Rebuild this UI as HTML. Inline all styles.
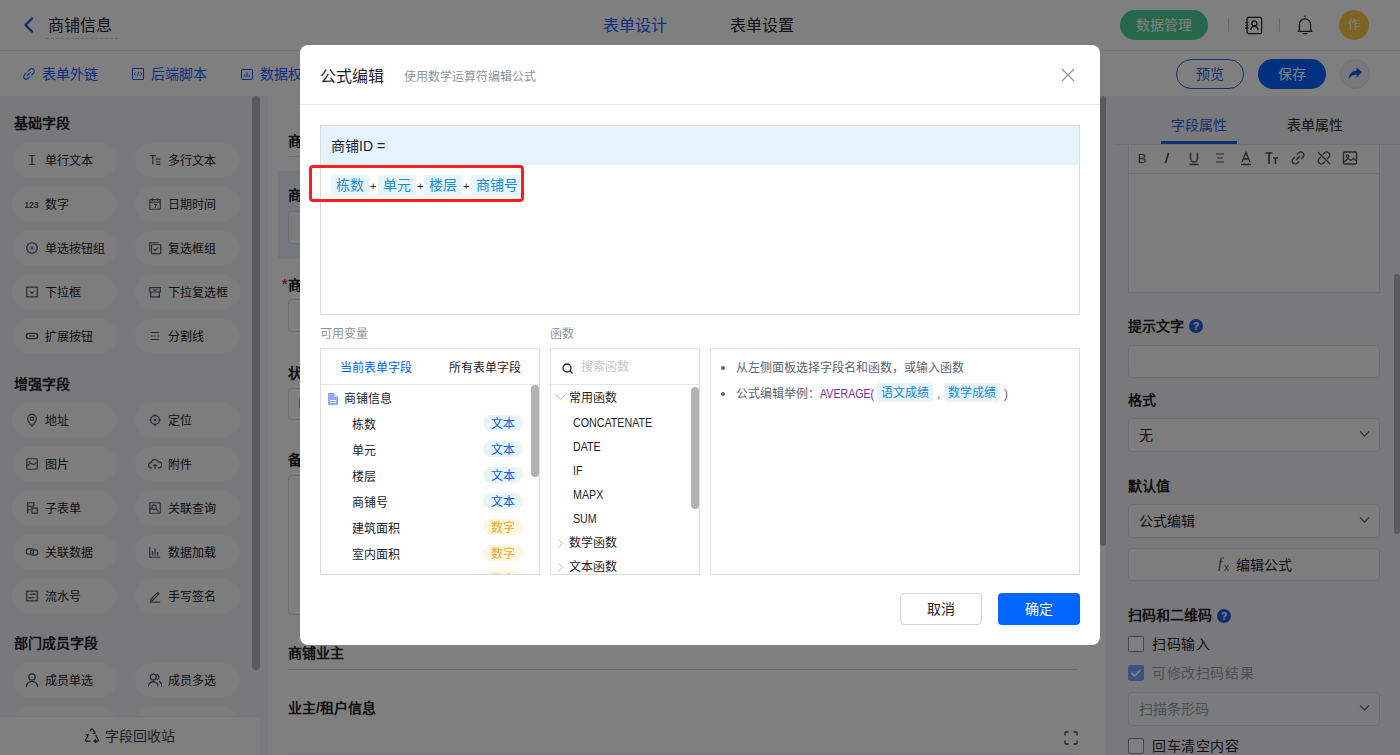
<!DOCTYPE html>
<html lang="zh-CN"><head><meta charset="utf-8">
<style>
*{box-sizing:border-box;margin:0;padding:0}
html,body{width:1400px;height:755px;overflow:hidden;background:#fff;font-family:"Liberation Sans",sans-serif;color:#1f2329}
.a{position:absolute}
.t{white-space:nowrap;line-height:1}
#page{position:absolute;left:0;top:0;width:1400px;height:755px;background:#fff}
#hdr{left:0;top:0;width:1400px;height:51px;border-bottom:1px solid #e8e9eb;background:#fff}
#tb{left:0;top:51px;width:1400px;height:45px;background:#fff}
#side{left:0;top:96px;width:268px;height:659px;background:#f2f3f6}
#center{left:268px;top:96px;width:838px;height:659px;background:#fff}
#right{left:1106px;top:96px;width:294px;height:659px;background:#f2f3f6}
.pill{position:absolute;width:105px;height:34px;border-radius:17px;background:#fafafb}
.pill .ic{position:absolute;left:13px;top:10px;width:14px;height:14px}
.pill .tx{position:absolute;left:33px;top:11px;font-size:12px;line-height:14px;color:#1f2329;white-space:nowrap}
.sh{position:absolute;left:14px;font-size:14px;font-weight:bold;line-height:16px;color:#1f2329;white-space:nowrap}
#overlay{left:0;top:0;width:1400px;height:755px;background:rgba(0,0,0,.5)}
#modal{left:300px;top:45px;width:800px;height:600px;background:#fff;border-radius:8px;overflow:hidden}
</style></head>
<body>
<div id="page">

  <div id="hdr" class="a">
    <svg class="a" style="left:22px;top:17px" width="14" height="16" viewBox="0 0 14 16"><polyline points="10,1.5 3.5,8 10,14.5" fill="none" stroke="#1f4fd6" stroke-width="2.2" stroke-linecap="round" stroke-linejoin="round"/></svg>
    <div class="a t" style="left:48px;top:18px;font-size:16px;color:#1f2329">商铺信息</div>
    <div class="a" style="left:46px;top:38px;width:72px;border-top:1px dashed #c9ccd2"></div>
    <div class="a t" style="left:603px;top:18px;font-size:16px;color:#1a5cff">表单设计</div>
    <div class="a t" style="left:730px;top:18px;font-size:16px;color:#1f2329">表单设置</div>
    <div class="a t" style="left:1120px;top:10px;width:88px;height:30px;border-radius:15px;background:#4ccf96;color:#fff;font-size:14px;line-height:30px;text-align:center">数据管理</div>
    <div class="a" style="left:1228px;top:18px;width:1px;height:14px;background:#d5d7db"></div>
    <svg class="a" style="left:1243px;top:15px" width="21" height="21" viewBox="0 0 21 21"><rect x="4" y="2.4" width="14.6" height="16.2" rx="1.5" fill="none" stroke="#262626" stroke-width="1.3"/><circle cx="11.4" cy="8.4" r="2.5" fill="none" stroke="#262626" stroke-width="1.3"/><path d="M7.8 14.9a3.6 3.6 0 0 1 7.2 0" fill="none" stroke="#262626" stroke-width="1.3"/><path d="M2 7.6h3.5M2 10.5h3.5M2 13.2h3.5" stroke="#262626" stroke-width="1.2"/></svg>
    <div class="a" style="left:1279px;top:18px;width:1px;height:14px;background:#d5d7db"></div>
    <svg class="a" style="left:1296px;top:15px" width="18" height="21" viewBox="0 0 18 21"><path d="M2.2 16.4Q3.4 15.8 3.4 14.5V9.5a5.6 5.6 0 0 1 11.2 0v5q0 1.3 1.2 1.9z" fill="none" stroke="#262626" stroke-width="1.3" stroke-linejoin="round"/><path d="M7 18.6h4M9 1.2v.6" stroke="#262626" stroke-width="1.3" stroke-linecap="round"/></svg>
    <div class="a t" style="left:1339px;top:10px;width:30px;height:30px;border-radius:15px;background:#fdc949;color:#fff;font-size:12px;line-height:31px;text-align:center">作</div>
  </div>
  <div id="tb" class="a">
    <svg class="a" style="left:22px;top:16px" width="14" height="14" viewBox="0 0 14 14"><path d="M6.2 4.2L8.3 2.1a2.6 2.6 0 0 1 3.6 3.6L9.8 7.8M7.8 9.8L5.7 11.9a2.6 2.6 0 0 1-3.6-3.6L4.2 6.2M5.3 8.7l3.4-3.4" fill="none" stroke="#1a5cff" stroke-width="1.1" stroke-linecap="round"/></svg>
    <div class="a t" style="left:42px;top:16px;font-size:14px;color:#1a5cff">表单外链</div>
    <svg class="a" style="left:131px;top:16px" width="14" height="14" viewBox="0 0 14 14"><rect x="1.5" y="1.5" width="11" height="11" rx="0.8" fill="none" stroke="#1a5cff" stroke-width="1.1"/><path d="M4.8 5.3L3.2 7l1.6 1.7M9.2 5.3L10.8 7 9.2 8.7M7.8 4.8L6.2 9.2" fill="none" stroke="#1a5cff" stroke-width="0.9"/></svg>
    <div class="a t" style="left:151px;top:16px;font-size:14px;color:#1a5cff">后端脚本</div>
    <svg class="a" style="left:240px;top:17px" width="14" height="13" viewBox="0 0 14 13"><rect x="1.5" y="1.5" width="11" height="10" rx="1.5" fill="none" stroke="#1a5cff" stroke-width="1.1"/><path d="M4.8 9V6.5M7 9V4.5M9.2 9V7" stroke="#1a5cff" stroke-width="1.1"/></svg>
    <div class="a t" style="left:260px;top:16px;font-size:14px;color:#1a5cff">数据权限</div>
    <div class="a t" style="left:1176px;top:8px;width:68px;height:30px;border-radius:15px;border:1px solid #1f5fe0;color:#1f5fe0;font-size:14px;line-height:28px;text-align:center">预览</div>
    <div class="a t" style="left:1258px;top:8px;width:68px;height:30px;border-radius:15px;background:#0062ff;color:#fff;font-size:14px;line-height:30px;text-align:center">保存</div>
    <div class="a" style="left:1340px;top:8px;width:30px;height:30px;border-radius:15px;background:#eef2fb;border:1px solid #dfe5f2"></div>
    <svg class="a" style="left:1347px;top:15px" width="16" height="16" viewBox="0 0 16 16"><path d="M15 6L9.5 1.5v3C5 5 2 8 1.5 13c1.8-3 4.5-4.2 8-4.2v3z" fill="#1f5fe0"/></svg>
  </div>

  <div id="side" class="a">
<div class="pill" style="left:12px;top:47px"><svg class="ic" viewBox="0 0 16 16"><path d="M5 3h6M5 13h6M8 3v10" stroke="#4e5870" stroke-width="1.5" fill="none"/></svg><div class="tx">单行文本</div></div>
<div class="pill" style="left:135px;top:47px"><svg class="ic" viewBox="0 0 16 16"><path d="M2 3h7M5.5 3v10M9 7h5M9 10h5M9 13h5" stroke="#4e5870" stroke-width="1.4" fill="none"/></svg><div class="tx">多行文本</div></div>
<div class="pill" style="left:12px;top:91px"><svg class="ic" viewBox="0 0 16 16"><text x="-1" y="12" font-size="10" font-weight="bold" fill="#4e5870" font-family="Liberation Sans">123</text></svg><div class="tx">数字</div></div>
<div class="pill" style="left:135px;top:91px"><svg class="ic" viewBox="0 0 16 16"><rect x="2" y="3" width="12" height="11" rx="1" fill="none" stroke="#4e5870" stroke-width="1.3"/><path d="M2 6h12M5 1.5v3M11 1.5v3M7 8.5h2.5l-1.5 4" stroke="#4e5870" stroke-width="1.2" fill="none"/></svg><div class="tx">日期时间</div></div>
<div class="pill" style="left:12px;top:135px"><svg class="ic" viewBox="0 0 16 16"><circle cx="8" cy="8" r="6" fill="none" stroke="#4e5870" stroke-width="1.4"/><circle cx="8" cy="8" r="1.6" fill="#4e5870"/></svg><div class="tx">单选按钮组</div></div>
<div class="pill" style="left:135px;top:135px"><svg class="ic" viewBox="0 0 16 16"><path d="M2 12V2h10" fill="none" stroke="#4e5870" stroke-width="1.2"/><rect x="4" y="4" width="10.5" height="10.5" rx="1" fill="none" stroke="#4e5870" stroke-width="1.4"/><path d="M6.3 9l1.8 1.8 3.5-3.5" fill="none" stroke="#4e5870" stroke-width="1.3"/></svg><div class="tx">复选框组</div></div>
<div class="pill" style="left:12px;top:179px"><svg class="ic" viewBox="0 0 16 16"><rect x="2" y="2.5" width="12" height="11" rx="1" fill="none" stroke="#4e5870" stroke-width="1.4"/><path d="M5.5 7l2.5 2.5L10.5 7" fill="none" stroke="#4e5870" stroke-width="1.3"/></svg><div class="tx">下拉框</div></div>
<div class="pill" style="left:135px;top:179px"><svg class="ic" viewBox="0 0 16 16"><path d="M2 3h12v5H2z M3 8.5v5h10v-5" fill="none" stroke="#4e5870" stroke-width="1.4"/><path d="M6 5l2 1.5L10 5" fill="none" stroke="#4e5870" stroke-width="1.2"/></svg><div class="tx">下拉复选框</div></div>
<div class="pill" style="left:12px;top:223px"><svg class="ic" viewBox="0 0 16 16"><rect x="1.5" y="5" width="13" height="6" rx="3" fill="none" stroke="#4e5870" stroke-width="1.5"/><path d="M5 8h6" stroke="#4e5870" stroke-width="1.3"/></svg><div class="tx">扩展按钮</div></div>
<div class="pill" style="left:135px;top:223px"><svg class="ic" viewBox="0 0 16 16"><path d="M3 4h10M3 8h2.5M7 8h2M10.5 8h2.5M3 12h10" stroke="#4e5870" stroke-width="1.3" fill="none"/></svg><div class="tx">分割线</div></div>
<div class="pill" style="left:12px;top:307px"><svg class="ic" viewBox="0 0 16 16"><path d="M8 15C4.5 11 3 8.8 3 6.5a5 5 0 0 1 10 0C13 8.8 11.5 11 8 15z" fill="none" stroke="#4e5870" stroke-width="1.4"/><circle cx="8" cy="6.5" r="1.8" fill="none" stroke="#4e5870" stroke-width="1.3"/></svg><div class="tx">地址</div></div>
<div class="pill" style="left:135px;top:307px"><svg class="ic" viewBox="0 0 16 16"><circle cx="8" cy="8" r="5" fill="none" stroke="#4e5870" stroke-width="1.4"/><circle cx="8" cy="8" r="1.5" fill="#4e5870"/><path d="M8 1v2.5M8 12.5V15M1 8h2.5M12.5 8H15" stroke="#4e5870" stroke-width="1.4"/></svg><div class="tx">定位</div></div>
<div class="pill" style="left:12px;top:351px"><svg class="ic" viewBox="0 0 16 16"><rect x="2" y="2" width="12" height="12" rx="1.2" fill="none" stroke="#4e5870" stroke-width="1.4"/><path d="M2.5 10.5c2-3 4-4 6-2.5s3 0 5-2" fill="none" stroke="#4e5870" stroke-width="1.3"/><circle cx="5.2" cy="5.2" r="1" fill="#4e5870"/></svg><div class="tx">图片</div></div>
<div class="pill" style="left:135px;top:351px"><svg class="ic" viewBox="0 0 16 16"><path d="M4.5 12.5H4a3 3 0 0 1-.5-6A4.5 4.5 0 0 1 12 5.5a3.2 3.2 0 0 1 .5 7H11.5" fill="none" stroke="#4e5870" stroke-width="1.4"/><path d="M8 14V8.5M6 10.5l2-2 2 2" fill="none" stroke="#4e5870" stroke-width="1.3"/></svg><div class="tx">附件</div></div>
<div class="pill" style="left:12px;top:395px"><svg class="ic" viewBox="0 0 16 16"><path d="M3 14V2h7v4M3 6h7M3 10h4" fill="none" stroke="#4e5870" stroke-width="1.4"/><rect x="8" y="8" width="6" height="6" fill="none" stroke="#4e5870" stroke-width="1.4"/></svg><div class="tx">子表单</div></div>
<div class="pill" style="left:135px;top:395px"><svg class="ic" viewBox="0 0 16 16"><rect x="2" y="2" width="12" height="12" rx="1" fill="none" stroke="#4e5870" stroke-width="1.4"/><circle cx="7" cy="7" r="2.5" fill="none" stroke="#4e5870" stroke-width="1.3"/><path d="M9 9l3 3M2 9h3" stroke="#4e5870" stroke-width="1.3"/></svg><div class="tx">关联查询</div></div>
<div class="pill" style="left:12px;top:439px"><svg class="ic" viewBox="0 0 16 16"><rect x="1.5" y="4.5" width="8" height="6" rx="2" fill="none" stroke="#4e5870" stroke-width="1.4"/><rect x="6.5" y="5.5" width="8" height="6" rx="2" fill="none" stroke="#4e5870" stroke-width="1.4"/></svg><div class="tx">关联数据</div></div>
<div class="pill" style="left:135px;top:439px"><svg class="ic" viewBox="0 0 16 16"><path d="M2 2v12h12M5 12V7M8 12V4M11 12V8" fill="none" stroke="#4e5870" stroke-width="1.4"/></svg><div class="tx">数据加载</div></div>
<div class="pill" style="left:12px;top:483px"><svg class="ic" viewBox="0 0 16 16"><rect x="2" y="2.5" width="12" height="11" rx="1" fill="none" stroke="#4e5870" stroke-width="1.4"/><path d="M5 6h6l-1.5-1.3M11 10H5l1.5 1.3" fill="none" stroke="#4e5870" stroke-width="1.2"/></svg><div class="tx">流水号</div></div>
<div class="pill" style="left:135px;top:483px"><svg class="ic" viewBox="0 0 16 16"><path d="M3 12L11 4l1.5 1.5-8 8H3z" fill="none" stroke="#4e5870" stroke-width="1.3"/><path d="M2 15h12" stroke="#4e5870" stroke-width="1.3"/></svg><div class="tx">手写签名</div></div>
<div class="pill" style="left:12px;top:567px"><svg class="ic" viewBox="0 0 16 16"><circle cx="8" cy="4.6" r="3.6" fill="none" stroke="#4e5870" stroke-width="1.5"/><path d="M1.5 16a6.5 6.5 0 0 1 13 0" fill="none" stroke="#4e5870" stroke-width="1.5"/></svg><div class="tx">成员单选</div></div>
<div class="pill" style="left:135px;top:567px"><svg class="ic" viewBox="0 0 16 16"><circle cx="6" cy="4.6" r="3.4" fill="none" stroke="#4e5870" stroke-width="1.5"/><path d="M0.5 15.5a5.5 5.5 0 0 1 11 0M9.8 1.5a3.4 3.4 0 0 1 .5 6.5M12.5 9.5a5.5 5.5 0 0 1 3 6" fill="none" stroke="#4e5870" stroke-width="1.5"/></svg><div class="tx">成员多选</div></div>
<div class="pill" style="left:12px;top:611px"><svg class="ic" viewBox="0 0 16 16"><circle cx="8" cy="4.6" r="3.6" fill="none" stroke="#4e5870" stroke-width="1.5"/><path d="M1.5 16a6.5 6.5 0 0 1 13 0" fill="none" stroke="#4e5870" stroke-width="1.5"/></svg><div class="tx">部门单选</div></div>
<div class="pill" style="left:135px;top:611px"><svg class="ic" viewBox="0 0 16 16"><circle cx="6" cy="4.6" r="3.4" fill="none" stroke="#4e5870" stroke-width="1.5"/><path d="M0.5 15.5a5.5 5.5 0 0 1 11 0M9.8 1.5a3.4 3.4 0 0 1 .5 6.5M12.5 9.5a5.5 5.5 0 0 1 3 6" fill="none" stroke="#4e5870" stroke-width="1.5"/></svg><div class="tx">部门多选</div></div>
<div class="sh" style="top:19px">基础字段</div>
<div class="sh" style="top:280px">增强字段</div>
<div class="sh" style="top:539px">部门成员字段</div>
<div class="a" style="left:252px;top:0px;width:8px;height:574px;border-radius:4px;background:#b3b5b9"></div>
<div class="a" style="left:0;top:620px;width:260px;height:39px;background:#fff;border-top:1px solid #eceef1"></div>
<svg class="a" style="left:84px;top:632px" width="16" height="16" viewBox="0 0 16 16"><path d="M6.2 2.8L7.3 1.2a.8.8 0 0 1 1.4 0l2.3 3.9M11.8 7.5l2.6 4.4a.8.8 0 0 1-.7 1.2H10M6 13.1H2.3a.8.8 0 0 1-.7-1.2L3.8 8M9.8 3.4l1.3 1.8-2.2.3M12 14.6l-2-1.5 1.7-1.5M2.6 6.4l1.3 1.7.8-2" fill="none" stroke="#2a2e36" stroke-width="1.2" stroke-linejoin="round" stroke-linecap="round"/></svg>
<div class="a t" style="left:105px;top:633px;font-size:14px;color:#3c4048">字段回收站</div>
</div>
  <div id="center" class="a">
<div class="a t" style="left:20px;top:38px;font-size:14px;font-weight:bold">商铺信息</div>
<div class="a" style="left:20px;top:60px;width:790px;height:1px;background:#e3e5e9"></div>
<div class="a" style="left:10px;top:75px;width:810px;height:88px;background:#eaf0fc"></div>
<div class="a t" style="left:20px;top:92px;font-size:14px;font-weight:bold">商铺ID</div>
<div class="a" style="left:20px;top:115px;width:790px;height:33px;border:1px solid #dcdfe5;border-radius:4px;background:#f7f8fa"></div>
<div class="a t" style="left:14px;top:181px;font-size:14px;font-weight:bold;color:#e03a3a">*</div>
<div class="a t" style="left:20px;top:182px;font-size:14px;font-weight:bold">商铺名称</div>
<div class="a" style="left:20px;top:203px;width:790px;height:33px;border:1px solid #dcdfe5;border-radius:4px;background:#fff"></div>
<div class="a t" style="left:20px;top:270px;font-size:14px;font-weight:bold">状态</div>
<div class="a" style="left:20px;top:292px;width:790px;height:32px;border:1px solid #dcdfe5;border-radius:4px;background:#fff"></div>
<div class="a" style="left:31px;top:302px;width:12px;height:11px;background:#4cc38a;border-radius:2px"></div>
<div class="a t" style="left:20px;top:357px;font-size:14px;font-weight:bold">备注</div>
<div class="a" style="left:20px;top:379px;width:790px;height:140px;border:1px solid #dcdfe5;border-radius:4px;background:#fff"></div>
<div class="a t" style="left:20px;top:550px;font-size:14px;font-weight:bold">商铺业主</div>
<div class="a" style="left:20px;top:573px;width:790px;height:1px;background:#d9dbe0"></div>
<div class="a t" style="left:20px;top:605px;font-size:14px;font-weight:bold">业主/租户信息</div>
<svg class="a" style="left:796px;top:635px" width="14" height="14" viewBox="0 0 14 14"><path d="M1 4.5V2a1 1 0 0 1 1-1h2.5M9.5 1H12a1 1 0 0 1 1 1v2.5M13 9.5V12a1 1 0 0 1-1 1H9.5M4.5 13H2a1 1 0 0 1-1-1V9.5" fill="none" stroke="#3c4048" stroke-width="1.3"/></svg>
<div class="a" style="left:20px;top:658px;width:790px;height:1px;background:#e8e9ec"></div>
<div class="a" style="left:832px;top:0;width:6px;height:450px;border-radius:3px;background:#b3b5b9"></div>
</div>
  <div id="right" class="a">
<div class="a t" style="left:65px;top:22px;font-size:14px;color:#1f5fe0">字段属性</div>
<div class="a t" style="left:181px;top:22px;font-size:14px;color:#1f2329">表单属性</div>
<div class="a" style="left:8px;top:48px;width:286px;height:1px;background:#dfe1e6"></div>
<div class="a" style="left:55px;top:45px;width:76px;height:3px;background:#1f5fe0"></div>
<div class="a" style="left:22px;top:49px;width:252px;height:148px;border:1px solid #dcdfe5;border-top:none;background:#fafafb"></div>
<div class="a" style="left:22px;top:77px;width:252px;height:1px;background:#dcdfe5"></div>
<svg class="a" style="left:28px;top:54px" width="16" height="16" viewBox="0 0 16 16"><text x="8" y="13" font-size="13" text-anchor="middle" fill="#4a4f59" font-family="Liberation Sans">B</text></svg>
<svg class="a" style="left:53px;top:54px" width="16" height="16" viewBox="0 0 16 16"><path d="M9.5 3L6.5 13" stroke="#4a4f59" stroke-width="1.6"/></svg>
<svg class="a" style="left:80px;top:54px" width="16" height="16" viewBox="0 0 16 16"><path d="M4.5 2.5v6a3.5 3.5 0 0 0 7 0v-6M3.5 14.5h9" fill="none" stroke="#4a4f59" stroke-width="1.3"/></svg>
<svg class="a" style="left:106px;top:54px" width="16" height="16" viewBox="0 0 16 16"><path d="M4 4h8M5 8h6M4 12h8" stroke="#4a4f59" stroke-width="1.2"/></svg>
<svg class="a" style="left:132px;top:54px" width="16" height="16" viewBox="0 0 16 16"><path d="M4 12L8 2.5 12 12M5.5 9h5M3 14.5h10" fill="none" stroke="#4a4f59" stroke-width="1.3"/></svg>
<svg class="a" style="left:158px;top:54px" width="16" height="16" viewBox="0 0 16 16"><path d="M1.5 3h7M5 3v11M9 8h5M11.5 8v6" fill="none" stroke="#4a4f59" stroke-width="1.6"/></svg>
<svg class="a" style="left:184px;top:54px" width="16" height="16" viewBox="0 0 16 16"><path d="M7 4.5l1.5-1.5a3 3 0 0 1 4.3 4.3L11 9M9 11.5L7.5 13a3 3 0 0 1-4.3-4.3L5 7M6 10l4-4" fill="none" stroke="#4a4f59" stroke-width="1.3"/></svg>
<svg class="a" style="left:210px;top:54px" width="16" height="16" viewBox="0 0 16 16"><path d="M7 4.5l1.5-1.5a3 3 0 0 1 4.3 4.3L11 9M9 11.5L7.5 13a3 3 0 0 1-4.3-4.3L5 7M2 2l12 12" fill="none" stroke="#4a4f59" stroke-width="1.3"/></svg>
<svg class="a" style="left:236px;top:54px" width="16" height="16" viewBox="0 0 16 16"><rect x="1.5" y="2" width="13" height="12" rx="1" fill="none" stroke="#4a4f59" stroke-width="1.3"/><circle cx="5.5" cy="6" r="1.3" fill="none" stroke="#4a4f59" stroke-width="1.1"/><path d="M2 12l4-3.5 3 2 2.5-2 3 2.5" fill="none" stroke="#4a4f59" stroke-width="1.2"/></svg>
<div class="a t" style="left:22px;top:222px;font-size:14px;font-weight:bold;color:#1f2329;line-height:16px">提示文字</div><div class="a t" style="left:83px;top:223px;width:14px;height:14px;border-radius:7px;background:#1f5fe0;color:#fff;font-size:11px;font-weight:bold;line-height:14px;text-align:center">?</div>
<div class="a" style="left:22px;top:249px;width:252px;height:33px;border:1px solid #dcdfe5;border-radius:4px;background:#fafafb"></div>
<div class="a t" style="left:22px;top:296px;font-size:14px;font-weight:bold;color:#1f2329;line-height:16px">格式</div>
<div class="a" style="left:22px;top:322px;width:252px;height:34px;border:1px solid #dcdfe5;border-radius:4px;background:#fafafb"></div><div class="a t" style="left:33px;top:332px;font-size:14px;color:#1f2329">无</div><svg class="a" style="left:253px;top:334px" width="11" height="8" viewBox="0 0 11 8"><path d="M1 1.5l4.5 4.5L10 1.5" fill="none" stroke="#6b7079" stroke-width="1.3"/></svg>
<div class="a t" style="left:22px;top:382px;font-size:14px;font-weight:bold;color:#1f2329;line-height:16px">默认值</div>
<div class="a" style="left:22px;top:408px;width:252px;height:34px;border:1px solid #dcdfe5;border-radius:4px;background:#fafafb"></div><div class="a t" style="left:33px;top:418px;font-size:14px;color:#1f2329">公式编辑</div><svg class="a" style="left:253px;top:420px" width="11" height="8" viewBox="0 0 11 8"><path d="M1 1.5l4.5 4.5L10 1.5" fill="none" stroke="#6b7079" stroke-width="1.3"/></svg>
<div class="a" style="left:22px;top:452px;width:252px;height:33px;border:1px solid #dcdfe5;border-radius:4px;background:#fafafb"></div>
<div class="a t" style="left:112px;top:460px;font-size:15px;font-style:italic;font-family:'Liberation Serif',serif;color:#4a4f59">f</div><div class="a t" style="left:118px;top:467px;font-size:10px;font-family:'Liberation Sans',sans-serif;color:#4a4f59">x</div>
<div class="a t" style="left:130px;top:462px;font-size:14px;color:#1f2329">编辑公式</div>
<div class="a t" style="left:22px;top:511px;font-size:14px;font-weight:bold;color:#1f2329;line-height:16px">扫码和二维码</div><div class="a t" style="left:111px;top:513px;width:14px;height:14px;border-radius:7px;background:#1f5fe0;color:#fff;font-size:11px;font-weight:bold;line-height:14px;text-align:center">?</div>
<div class="a" style="left:22px;top:540px;width:16px;height:16px;border-radius:2px;border:1px solid #8a8f98;background:#fff"></div><div class="a t" style="left:46px;top:541px;font-size:14px;color:#1f2329;letter-spacing:0.6px">扫码输入</div>
<div class="a" style="left:22px;top:569px;width:16px;height:16px;border-radius:2px;background:#7aa7ff"></div><svg class="a" style="left:22px;top:569px" width="16" height="16" viewBox="0 0 16 16"><path d="M3.5 8l3 3 6-6" fill="none" stroke="#fff" stroke-width="1.8"/></svg><div class="a t" style="left:46px;top:570px;font-size:14px;color:#9a9ea6;letter-spacing:0.6px">可修改扫码结果</div>
<div class="a" style="left:22px;top:596px;width:252px;height:34px;border:1px solid #dcdfe5;border-radius:4px;background:#f5f6f8"></div><div class="a t" style="left:33px;top:606px;font-size:14px;color:#9a9ea6">扫描条形码</div><svg class="a" style="left:253px;top:608px" width="11" height="8" viewBox="0 0 11 8"><path d="M1 1.5l4.5 4.5L10 1.5" fill="none" stroke="#6b7079" stroke-width="1.3"/></svg>
<div class="a" style="left:22px;top:642px;width:16px;height:16px;border-radius:2px;border:1px solid #8a8f98;background:#fff"></div><div class="a t" style="left:46px;top:643px;font-size:14px;color:#1f2329;letter-spacing:0.6px">回车清空内容</div>
<div class="a" style="left:288px;top:178px;width:6px;height:260px;border-radius:3px;background:#b3b5b9"></div>
</div>
</div>
<div id="overlay" class="a"></div>
<div id="modal" class="a">
<div class="a t" style="left:20px;top:24px;font-size:16px;color:#1f2329;line-height:16px">公式编辑</div>
<div class="a t" style="left:104px;top:26px;font-size:12px;color:#8f959e;line-height:12px">使用数学运算符编辑公式</div>
<svg class="a" style="left:760px;top:22px" width="16" height="16" viewBox="0 0 16 16"><path d="M2 2l12 12M14 2L2 14" stroke="#8a8f99" stroke-width="1.2"/></svg>
<div class="a" style="left:0;top:59px;width:800px;height:1px;background:#e8e9eb"></div>
<div class="a" style="left:20px;top:80px;width:760px;height:190px;border:1px solid #dddddd;background:#fff"></div>
<div class="a" style="left:21px;top:81px;width:758px;height:39px;background:#e5f3ff"></div>
<div class="a t" style="left:31px;top:94px;font-size:14px;color:#1f2329;line-height:14px">商铺ID =</div>
<div class="a t" style="left:31px;top:130px;height:20px;padding:0 5px;background:#e8f4ff;border-radius:2px;color:#1a8fd6;font-size:14px;line-height:20px">栋数</div>
<div class="a t" style="left:70px;top:136px;font-size:11px;color:#1f2329;line-height:11px">+</div>
<div class="a t" style="left:78px;top:130px;height:20px;padding:0 5px;background:#e8f4ff;border-radius:2px;color:#1a8fd6;font-size:14px;line-height:20px">单元</div>
<div class="a t" style="left:117px;top:136px;font-size:11px;color:#1f2329;line-height:11px">+</div>
<div class="a t" style="left:124px;top:130px;height:20px;padding:0 5px;background:#e8f4ff;border-radius:2px;color:#1a8fd6;font-size:14px;line-height:20px">楼层</div>
<div class="a t" style="left:163px;top:136px;font-size:11px;color:#1f2329;line-height:11px">+</div>
<div class="a t" style="left:171px;top:130px;height:20px;padding:0 5px;background:#e8f4ff;border-radius:2px;color:#1a8fd6;font-size:14px;line-height:20px">商铺号</div>
<div class="a" style="left:9px;top:120px;width:215px;height:37px;border:3px solid #fa1e1e;border-radius:4px"></div>
<div class="a t" style="left:20px;top:283px;font-size:12px;color:#8f959e;line-height:12px">可用变量</div>
<div class="a t" style="left:250px;top:283px;font-size:12px;color:#8f959e;line-height:12px">函数</div>
<div class="a" style="left:20px;top:303px;width:220px;height:227px;border:1px solid #dddddd;background:#fff"></div>
<div class="a" style="left:21px;top:339px;width:218px;height:1px;background:#e5e5e5"></div>
<div class="a t" style="left:40px;top:317px;font-size:12px;color:#0a5cff;line-height:12px">当前表单字段</div>
<div class="a t" style="left:149px;top:317px;font-size:12px;color:#1f2329;line-height:12px">所有表单字段</div>
<svg class="a" style="left:28px;top:348px" width="10" height="12" viewBox="0 0 10 12"><path d="M0 0h6L10 4V12H0z" fill="#94a8f5"/><path d="M6 0v4h4" fill="#c8d3fa"/><path d="M2 7.5h6M2 9.5h6" stroke="#fff" stroke-width="1"/></svg>
<div class="a t" style="left:44px;top:348px;font-size:12px;color:#1f2329;line-height:12px">商铺信息</div>
<div class="a t" style="left:52px;top:374px;font-size:12px;color:#1f2329;line-height:12px">栋数</div>
<div class="a t" style="left:183px;top:372px;width:40px;height:16px;border-radius:8px;background:#e6f6f8;margin-top:-2px;color:#0a5cff;font-size:12px;line-height:18px;text-align:center">文本</div>
<div class="a t" style="left:52px;top:400px;font-size:12px;color:#1f2329;line-height:12px">单元</div>
<div class="a t" style="left:183px;top:398px;width:40px;height:16px;border-radius:8px;background:#e6f6f8;margin-top:-2px;color:#0a5cff;font-size:12px;line-height:18px;text-align:center">文本</div>
<div class="a t" style="left:52px;top:426px;font-size:12px;color:#1f2329;line-height:12px">楼层</div>
<div class="a t" style="left:183px;top:424px;width:40px;height:16px;border-radius:8px;background:#e6f6f8;margin-top:-2px;color:#0a5cff;font-size:12px;line-height:18px;text-align:center">文本</div>
<div class="a t" style="left:52px;top:452px;font-size:12px;color:#1f2329;line-height:12px">商铺号</div>
<div class="a t" style="left:183px;top:450px;width:40px;height:16px;border-radius:8px;background:#e6f6f8;margin-top:-2px;color:#0a5cff;font-size:12px;line-height:18px;text-align:center">文本</div>
<div class="a t" style="left:52px;top:478px;font-size:12px;color:#1f2329;line-height:12px">建筑面积</div>
<div class="a t" style="left:183px;top:476px;width:40px;height:16px;border-radius:8px;background:#fff6e0;margin-top:-2px;color:#f5a623;font-size:12px;line-height:18px;text-align:center">数字</div>
<div class="a t" style="left:52px;top:504px;font-size:12px;color:#1f2329;line-height:12px">室内面积</div>
<div class="a t" style="left:183px;top:502px;width:40px;height:16px;border-radius:8px;background:#fff6e0;margin-top:-2px;color:#f5a623;font-size:12px;line-height:18px;text-align:center">数字</div>
<div class="a t" style="left:183px;top:528px;width:40px;height:16px;border-radius:8px;background:#fff6e0;margin-top:-2px;color:#f5a623;font-size:12px;line-height:18px;text-align:center">数字</div>
<div class="a" style="left:21px;top:529px;width:218px;height:30px;background:#fff"></div>
<div class="a" style="left:20px;top:529px;width:220px;height:1px;background:#dddddd"></div>
<div class="a" style="left:231px;top:340px;width:8px;height:92px;border-radius:4px;background:#b3b3b3"></div>
<div class="a" style="left:250px;top:303px;width:150px;height:227px;border:1px solid #dddddd;background:#fff;overflow:hidden"></div>
<div class="a" style="left:251px;top:339px;width:148px;height:1px;background:#e5e5e5"></div>
<svg class="a" style="left:262px;top:318px" width="11" height="11" viewBox="0 0 11 11"><circle cx="5" cy="5" r="4" fill="none" stroke="#1f2329" stroke-width="1.3"/><path d="M8 8l2.5 2.5" stroke="#1f2329" stroke-width="1.3"/></svg>
<div class="a t" style="left:281px;top:316px;font-size:12px;color:#c4c7cc;line-height:12px">搜索函数</div>
<svg class="a" style="left:255px;top:349px" width="11" height="7" viewBox="0 0 11 7"><path d="M.5 .5l5 5 5-5" fill="none" stroke="#b8bbc1" stroke-width="1"/></svg>
<div class="a t" style="left:269px;top:347px;font-size:12px;color:#1f2329;line-height:12px">常用函数</div>
<div class="a t" style="left:273px;top:372px;font-size:12px;color:#1f2329;line-height:12px"><span style="display:inline-block;transform:scaleX(0.89);transform-origin:0 0">CONCATENATE</span></div>
<div class="a t" style="left:273px;top:396px;font-size:12px;color:#1f2329;line-height:12px"><span style="display:inline-block;transform:scaleX(0.89);transform-origin:0 0">DATE</span></div>
<div class="a t" style="left:273px;top:420px;font-size:12px;color:#1f2329;line-height:12px"><span style="display:inline-block;transform:scaleX(0.89);transform-origin:0 0">IF</span></div>
<div class="a t" style="left:273px;top:444px;font-size:12px;color:#1f2329;line-height:12px"><span style="display:inline-block;transform:scaleX(0.89);transform-origin:0 0">MAPX</span></div>
<div class="a t" style="left:273px;top:468px;font-size:12px;color:#1f2329;line-height:12px"><span style="display:inline-block;transform:scaleX(0.89);transform-origin:0 0">SUM</span></div>
<svg class="a" style="left:258px;top:494px" width="5" height="9" viewBox="0 0 5 9"><path d="M.5 .5l4 4-4 4" fill="none" stroke="#b8bbc1" stroke-width="1"/></svg>
<div class="a t" style="left:269px;top:492px;font-size:12px;color:#1f2329;line-height:12px">数学函数</div>
<svg class="a" style="left:258px;top:518px" width="5" height="9" viewBox="0 0 5 9"><path d="M.5 .5l4 4-4 4" fill="none" stroke="#b8bbc1" stroke-width="1"/></svg>
<div class="a t" style="left:269px;top:516px;font-size:12px;color:#1f2329;line-height:12px">文本函数</div>
<div class="a" style="left:251px;top:529px;width:148px;height:30px;background:#fff"></div>
<div class="a" style="left:250px;top:529px;width:150px;height:1px;background:#dddddd"></div>
<div class="a" style="left:391px;top:342px;width:8px;height:122px;border-radius:4px;background:#b3b3b3"></div>
<div class="a" style="left:410px;top:303px;width:370px;height:227px;border:1px solid #dddddd;background:#fff"></div>
<div class="a" style="left:421px;top:321px;width:4px;height:4px;border-radius:2px;background:#5c6370"></div>
<div class="a" style="left:421px;top:347px;width:4px;height:4px;border-radius:2px;background:#5c6370"></div>
<div class="a t" style="left:436px;top:317px;font-size:12px;color:#5c6370;line-height:12px">从左侧面板选择字段名和函数，或输入函数</div>
<div class="a t" style="left:436px;top:343px;font-size:12px;color:#5c6370;line-height:12px">公式编辑举例：<span style="color:#7a2a9c;display:inline-block;transform:scaleX(0.885);transform-origin:0 0">AVERAGE(</span></div>
<div class="a t" style="left:577px;top:338px;height:19px;padding:0 4px;background:#e5f3ff;border-radius:3px;color:#1a8ad4;font-size:12px;line-height:20px">语文成绩</div>
<div class="a t" style="left:637px;top:343px;font-size:12px;color:#5c6370;line-height:12px">,</div>
<div class="a t" style="left:644px;top:338px;height:19px;padding:0 4px;background:#e5f3ff;border-radius:3px;color:#1a8ad4;font-size:12px;line-height:20px">数学成绩</div>
<div class="a t" style="left:704px;top:343px;font-size:12px;color:#6a5a8a;line-height:12px">)</div>
<div class="a t" style="left:600px;top:548px;width:82px;height:32px;border:1px solid #d0d3d9;border-radius:4px;background:#fff;color:#1f2329;font-size:14px;line-height:30px;text-align:center">取消</div>
<div class="a t" style="left:698px;top:548px;width:82px;height:32px;border-radius:4px;background:#0066ff;color:#fff;font-size:14px;line-height:32px;text-align:center">确定</div>
</div>
</body></html>
